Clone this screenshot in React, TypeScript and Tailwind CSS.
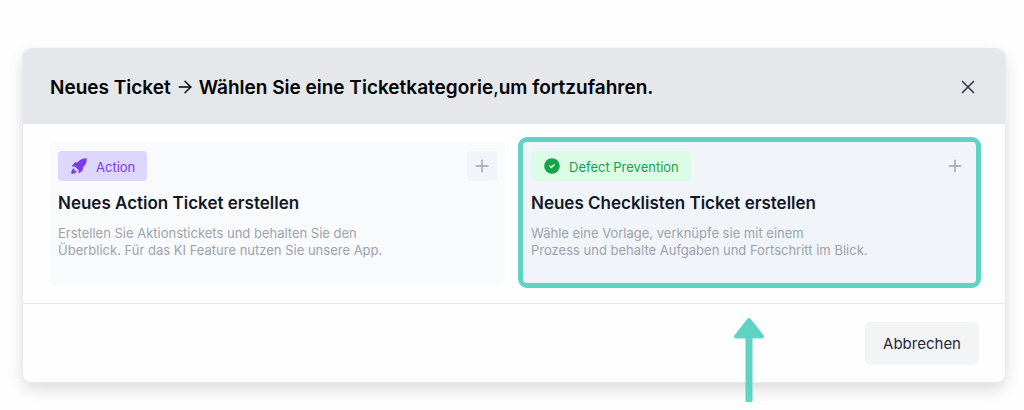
import type { ReactNode } from 'react';
import { ArrowRight, Plus, X } from 'lucide-react';

function RocketIcon() {
  return (
    <svg viewBox="0 0 18 18" className="size-[18px]" fill="currentColor" aria-hidden="true">
      <path d="M16.700 1.300C13 1.200 9.900 2.500 7.700 5.300C6.200 4.900 4.800 5.300 3.900 6.400L2 8.900C1.700 9.300 1.900 9.600 2.400 9.600L5.200 9.700 8.500 13 8.600 15.700C8.600 16.300 9 16.400 9.400 16.100L11.800 14.200C12.900 13.300 13.300 11.900 12.900 10.400C15.600 8.200 16.900 5.200 16.700 1.300Z" />
      <path d="M4.300 11.300C2.200 11.800 1.400 13.600 1.200 16.800 4.400 16.700 6.300 16 6.800 13.900L5.500 14.100 4.100 12.700Z" />
    </svg>
  );
}

function CheckBadge() {
  return (
    <svg viewBox="0 0 18 18" className="size-[18px]" aria-hidden="true">
      <circle cx="9" cy="9" r="7.800" fill="currentColor" />
      <path
        d="M6.900 9.100 8.400 10.500 11.100 7.800"
        fill="none"
        stroke="#dcfce7"
        strokeWidth="1.400"
        strokeLinecap="round"
        strokeLinejoin="round"
      />
    </svg>
  );
}

type CategoryCardProps = {
  icon: ReactNode;
  label: string;
  badgeClass: string;
  cardClass: string;
  addClass: string;
  title: string;
  lines: [string, string];
  highlighted?: boolean;
};

function CategoryCard(props: CategoryCardProps) {
  return (
    <article className={`relative h-36 rounded-md px-2 pt-[9px] ${props.cardClass}`}>
      <div className="flex items-center justify-between">
        <span
          className={`flex h-[30px] items-center gap-2 rounded px-3 text-[13px] leading-5 ${props.badgeClass}`}
        >
          {props.icon}
          <span className="pt-px">{props.label}</span>
        </span>
        <button
          type="button"
          aria-label={props.title}
          className={`flex size-[30px] items-center justify-center rounded text-[#9ca3af] ${props.addClass}`}
        >
          <Plus className="size-5" strokeWidth={1.7} />
        </button>
      </div>
      <h2 className="mt-2 text-[17px] leading-7 font-semibold whitespace-nowrap text-[#111827]">
        {props.title}
      </h2>
      <p className="mt-2 text-[13px] leading-[17px] whitespace-nowrap text-[#9ca3af]">
        {props.lines[0]}
        <br />
        {props.lines[1]}
      </p>
      {props.highlighted && (
        <div className="pointer-events-none absolute -top-[5px] -right-[3px] -bottom-[2px] -left-[5px] rounded-[9px] border-[5px] border-[#5fd4c4]" />
      )}
    </article>
  );
}

export default function App() {
  return (
    <main className="min-h-screen bg-[#fefefe] px-[19px] pt-[49px] pl-[23px] font-['Inter',sans-serif]">
      <section
        role="dialog"
        aria-labelledby="dialog-title"
        className="rounded-lg bg-[#fefefe] shadow-[0_0_0_1px_#e9eaf0,0_8px_16px_rgba(0,0,0,0.11),0_4px_24px_rgba(0,0,0,0.04)]"
      >
        <header className="flex h-[75px] items-center justify-between rounded-t-lg bg-gray-200 pr-[26px] pl-[27px]">
          <h1
            id="dialog-title"
            className="flex items-center text-[19px] leading-7 font-semibold whitespace-nowrap text-black"
          >
            <span className="pt-[2px]">Neues Ticket</span>
            <ArrowRight className="mx-1 size-5" strokeWidth={1.6} />
            <span className="pt-[2px]">
              Wählen Sie eine Ticketkategorie<span className="font-normal">,</span>um fortzufahren.
            </span>
          </h1>
          <button type="button" aria-label="Schließen" className="text-[#374151]">
            <X className="size-[22px]" strokeWidth={1.8} />
          </button>
        </header>

        <div className="grid h-[179px] grid-cols-2 gap-[18px] px-[27px] pt-[18px]">
          <CategoryCard
            icon={<RocketIcon />}
            label="Action"
            badgeClass="bg-[#ddd6fe] text-[#7c3aed]"
            cardClass="bg-[#f9fafb]"
            addClass="bg-[#f1f4f9]"
            title="Neues Action Ticket erstellen"
            lines={[
              'Erstellen Sie Aktionstickets und behalten Sie den',
              'Überblick. Für das KI Feature nutzen Sie unsere App.',
            ]}
          />
          <CategoryCard
            icon={<CheckBadge />}
            label="Defect Prevention"
            badgeClass="bg-[#dcfce7] text-[#16a34a]"
            cardClass="bg-[#f1f5f9]"
            addClass="bg-[#f1f5f9]"
            title="Neues Checklisten Ticket erstellen"
            lines={[
              'Wähle eine Vorlage, verknüpfe sie mit einem',
              'Prozess und behalte Aufgaben und Fortschritt im Blick.',
            ]}
            highlighted
          />
        </div>

        <footer className="relative flex h-[79px] justify-end border-t border-gray-200 px-[26px] pt-[18px]">
          <button
            type="button"
            className="h-[43px] rounded-md bg-gray-100 px-[18px] pt-px text-[15px] leading-6 text-[#1f2937]"
          >
            Abbrechen
          </button>
          <svg
            viewBox="0 0 32 86"
            className="pointer-events-none absolute top-[13px] right-[240px] h-[86px] w-8"
            aria-hidden="true"
          >
            <path
              d="M16 3 29 19.500H3Z"
              fill="#5fd4c4"
              stroke="#5fd4c4"
              strokeWidth="4"
              strokeLinejoin="round"
            />
            <rect x="12.500" y="18" width="7" height="67" rx="1.500" fill="#5fd4c4" />
          </svg>
        </footer>
      </section>
    </main>
  );
}
